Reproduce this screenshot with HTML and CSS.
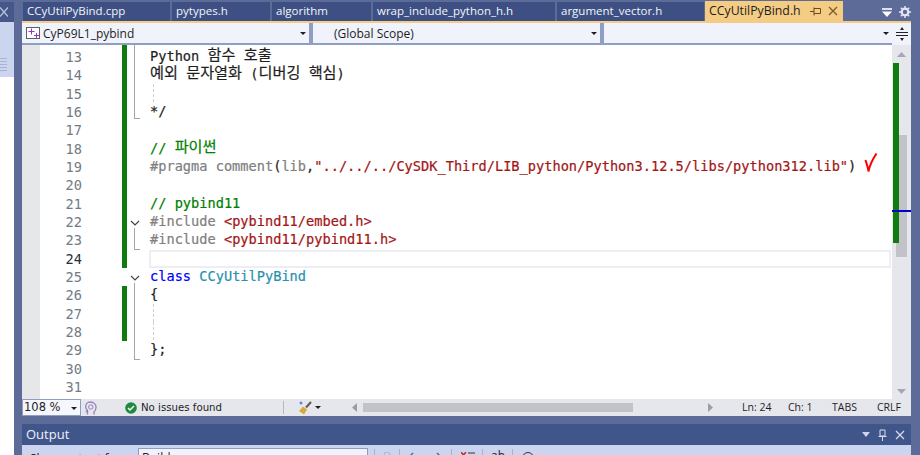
FILE: index.html
```html
<!DOCTYPE html>
<html lang="en">
<head>
<meta charset="utf-8">
<title>CCyUtilPyBind.h</title>
<link rel="stylesheet" href="styles.css">
</head>
<body>
<div class="shell">
  <aside class="side">
    <div class="side-top">
      <svg width="8" height="10" viewBox="0 0 8 10"><path d="M0 0.500l8 9M8 0.500l-8 9" stroke="#b8c2dd" stroke-width="1.300" fill="none"/></svg>
    </div>
    <div class="side-tool">
      <svg class="side-lines" width="7" height="14" viewBox="0 0 7 14"><path d="M0 1.500h7M0 4.500h7M0 7.500h7M0 10.500h7M0 13.500h7" stroke="#a9b2cf" fill="none"/></svg>
    </div>
    <div class="side-rest"></div>
  </aside>
  <main class="main">
    <div class="tabs">
      <div class="tab w1">CCyUtilPyBind.cpp</div>
      <div class="tab w2">pytypes.h</div>
      <div class="tab w3">algorithm</div>
      <div class="tab w4">wrap_include_python_h.h</div>
      <div class="tab w5">argument_vector.h</div>
      <div class="tab active">CCyUtilPyBind.h
        <svg class="pin" width="12" height="10" viewBox="0 0 12 10"><path d="M0 5.500H4M4 1.500v8M4 2.500h6.500v5H4" stroke="#6b4a1e" fill="none"/></svg>
        <svg class="close" width="10" height="10" viewBox="0 0 10 10"><path d="M1 1l8 8M9 1l-8 8" stroke="#7a5a2a" stroke-width="1.300" fill="none"/></svg>
      </div>
      <div class="tab-tools">
        <svg width="10" height="9" viewBox="0 0 10 9"><path d="M0 1h10" stroke="#fff" stroke-width="1.600"/><path d="M0 3.500h10L5 9z" fill="#fff"/></svg>
        <svg width="12" height="12" viewBox="0 0 12 12"><circle cx="6" cy="6" r="3.300" fill="none" stroke="#e4e8f4" stroke-width="2.200"/><path d="M6 0v2.500M6 9.500V12M0 6h2.500M9.500 6H12M1.800 1.800l1.800 1.800M8.400 8.400l1.800 1.800M10.200 1.800L8.400 3.600M3.600 8.400l-1.800 1.800" stroke="#e4e8f4" stroke-width="1.400"/></svg>
      </div>
    </div>
    <div class="doc">
      <div class="navbar">
        <div class="combo c1">
          <svg class="proj" width="14" height="12" viewBox="0 0 14 12"><rect x="0.500" y="0.500" width="13" height="11" fill="#fff" stroke="#5f5f5f"/><path d="M5.500 1.500v6M2.500 4.500h6M10.500 6v5M8 8.500h5" stroke="#a030c0" fill="none"/></svg>
          <span>CyP69L1_pybind</span><i class="arrow"></i>
        </div>
        <div class="combo c2"><span class="scope">(Global Scope)</span><i class="arrow"></i></div>
        <div class="combo c3"><i class="arrow"></i></div>
        <div class="split">
          <svg width="12" height="14" viewBox="0 0 12 14"><path d="M0 5.500h12M0 8.500h12" stroke="#222" fill="none"/><path d="M6 0l2 3H4zM6 14l2-3H4z" fill="#222"/></svg>
        </div>
      </div>
      <div class="editor">
        <div class="selmargin"></div>
        <div class="numbers">
          <div>13</div><div>14</div><div>15</div><div>16</div><div>17</div><div>18</div><div>19</div><div>20</div><div>21</div><div>22</div><div>23</div><div class="cur">24</div><div>25</div><div>26</div><div>27</div><div>28</div><div>29</div><div>30</div><div>31</div>
        </div>
        <div class="changes">
          <div class="chg h1"></div>
          <div class="chg h2"></div>
        </div>
        <div class="outline">
          <div class="bracket b0"></div>
          <svg class="fold f1" width="10" height="6" viewBox="0 0 10 6"><path d="M1 1l4 4 4-4" stroke="#444" stroke-width="1.200" fill="none"/></svg>
          <div class="bracket b1"></div>
          <svg class="fold f2" width="10" height="6" viewBox="0 0 10 6"><path d="M1 1l4 4 4-4" stroke="#444" stroke-width="1.200" fill="none"/></svg>
          <div class="bracket b2"></div>
        </div>
        <div class="code">
          <div class="ln">Python <span class="ko">함수</span> <span class="ko">호출</span></div>
          <div class="ln"><span class="ko">예외</span> <span class="ko">문자열화</span> (<span class="ko">디버깅</span> <span class="ko">핵심</span>)</div>
          <div class="ln"><span class="guide"></span></div>
          <div class="ln">*/</div>
          <div class="ln"></div>
          <div class="ln g">// <span class="ko">파이썬</span></div>
          <div class="ln"><span class="p">#pragma comment</span>(<span class="p">lib</span>,<span class="s">"../../../CySDK_Third/LIB_python/Python3.12.5/libs/python312.lib"</span>)<svg class="tick" width="14" height="20" viewBox="0 0 14 20"><path d="M1.500 7c.800 3 2.500 7 3 11.500 1-5.500 4-12 8-18" stroke="#f00" stroke-width="2" fill="none"/></svg></div>
          <div class="ln"></div>
          <div class="ln g">// pybind11</div>
          <div class="ln"><span class="p">#include</span> <span class="s">&lt;pybind11/embed.h&gt;</span></div>
          <div class="ln"><span class="p">#include</span> <span class="s">&lt;pybind11/pybind11.h&gt;</span></div>
          <div class="ln curline"></div>
          <div class="ln"><span class="kw">class</span> <span class="ty">CCyUtilPyBind</span></div>
          <div class="ln">{</div>
          <div class="ln"><span class="guide"></span></div>
          <div class="ln"><span class="guide"></span></div>
          <div class="ln">};</div>
          <div class="ln"></div>
          <div class="ln"></div>
        </div>
        <div class="vscroll">
          <svg class="sarrow" width="9" height="5" viewBox="0 0 9 5"><path d="M4.500 0L9 5H0z" fill="#a5a8b3"/></svg>
          <div class="track">
            <div class="thumb"></div>
            <div class="mark"></div>
            <div class="caret"></div>
          </div>
          <svg class="sarrow" width="9" height="5" viewBox="0 0 9 5"><path d="M4.500 5L9 0H0z" fill="#a5a8b3"/></svg>
        </div>
      </div>
      <div class="status">
        <div class="zoom"><span>108 %</span><i class="arrow"></i></div>
        <svg class="intelli" width="12" height="14" viewBox="0 0 12 14"><path d="M2.500 13.500V9.500C0 7.500 0 3 3 1.500c4-1.500 8.500 1 8 5 0 2.500-1 3.500-2 4.500v2.500" fill="none" stroke="#9a7fc0" stroke-width="1.300"/><circle cx="5.800" cy="6" r="2.200" fill="none" stroke="#9a7fc0"/><path d="M0.500 11l2-1.500" stroke="#7a5fb0"/></svg>
        <svg class="ok" width="12" height="12" viewBox="0 0 12 12"><circle cx="6" cy="6" r="5.800" fill="#1e8a3c"/><path d="M3 6l2 2 4-4" stroke="#fff" stroke-width="1.400" fill="none"/></svg>
        <span class="issues">No issues found</span>
        <span class="sep"></span>
        <svg class="broom" width="14" height="14" viewBox="0 0 14 14"><path d="M13 1L8 6.500" stroke="#5f5a50" stroke-width="2"/><path d="M5 5.500l4 3-3 5-5-3.500z" fill="#d9a93f"/><path d="M3 0.500v3M1.500 2h3" stroke="#3a64c4"/></svg>
        <i class="arrow dark"></i>
        <svg class="harrow left" width="5" height="9" viewBox="0 0 5 9"><path d="M5 0v9L0 4.500z" fill="#9a9da8"/></svg>
        <div class="htrack"><div class="hthumb"></div></div>
        <svg class="harrow right" width="5" height="9" viewBox="0 0 5 9"><path d="M0 0v9l5-4.500z" fill="#9a9da8"/></svg>
        <div class="positions">
          <span class="pos lnc">Ln: 24</span>
          <span class="pos chc">Ch: 1</span>
          <span class="pos tabsc">TABS</span>
          <span class="pos crlf">CRLF</span>
        </div>
      </div>
    </div>
    <section class="output">
      <div class="out-head">
        <span>Output</span>
        <div class="out-tools">
          <svg width="8" height="5" viewBox="0 0 8 5"><path d="M0 0h8L4 5z" fill="#cfd6ea"/></svg>
          <svg width="9" height="12" viewBox="0 0 9 12"><path d="M2 1h5v6H2zM0.500 7.500h8M4.500 8v4" fill="none" stroke="#d7ddef"/></svg>
          <svg width="10" height="10" viewBox="0 0 10 10"><path d="M1 1l8 8M9 1l-8 8" stroke="#d7ddef" stroke-width="1.200"/></svg>
        </div>
      </div>
      <div class="out-tool">
        <span class="show">Show output from:</span>
        <div class="out-combo">Build</div>
        <span class="tsep s1"></span>
        <svg class="ticon i1" width="8" height="10" viewBox="0 0 8 10"><path d="M1 5V3a3 3 0 0 1 6 0v2" fill="none" stroke="#a9b2cf"/></svg>
        <span class="tsep s2"></span>
        <svg class="ticon i2" width="12" height="8" viewBox="0 0 12 8"><path d="M12 4H2M5 1L2 4l3 3" fill="none" stroke="#1c6fc9" stroke-width="1.400"/></svg>
        <svg class="ticon i3" width="12" height="8" viewBox="0 0 12 8"><path d="M0 4h10M7 1l3 3-3 3" fill="none" stroke="#1c6fc9" stroke-width="1.400"/></svg>
        <span class="tsep s3"></span>
        <svg class="ticon i4" width="14" height="8" viewBox="0 0 14 8"><path d="M0 0l5 6M5 0L0 6" stroke="#c4262e" stroke-width="1.500"/><path d="M7 1h7M7 4h7M7 7h7" stroke="#333"/></svg>
        <span class="tsep s4"></span>
        <span class="ab">ab</span>
        <span class="tsep s5"></span>
        <svg class="ticon i5" width="12" height="12" viewBox="0 0 12 12"><circle cx="6" cy="6" r="5.500" fill="none" stroke="#333"/></svg>
      </div>
    </section>
  </main>
</div>
</body>
</html>
```
FILE: styles.css
```css
* { box-sizing: border-box; }
html, body { margin: 0; height: 100%; overflow: hidden; }
body { background: #5d6b99; font-family: "Open Sans", "Noto Sans", "Liberation Sans", sans-serif; color: #1e1e1e; }
i { display: block; }
svg { display: block; flex: none; }
.shell { display: flex; width: 920px; height: 455px; overflow: hidden; }

.side { width: 14px; flex: none; display: flex; flex-direction: column; overflow: hidden; }
.side-top { height: 20px; margin-top: 2px; background: #46578a; padding-top: 5px; }
.side-tool { height: 55px; background: #ccd5f0; padding-top: 35px; }
.side-rest { flex: 1; background: #fff; }

.main { flex: 1; margin: 0 9px 0 8px; min-width: 0; display: flex; flex-direction: column; }

.tabs { display: flex; height: 21px; flex: none; gap: 2px; padding-left: 1px; font-size: 11.500px; color: #f2f4fa; }
.tab { height: 19px; margin-top: 2px; background: #3e5083; line-height: 18px; padding-left: 4px; white-space: nowrap; }
.w1 { width: 147px; }
.w2 { width: 98px; }
.w3 { width: 99px; }
.w4 { width: 182px; }
.w5 { width: 147px; }
.active { width: 138px; height: 20px; margin-top: 1px; margin-left: -1px; background: #f5cc84; color: #1e1e1e; font-size: 12.300px; display: flex; align-items: center; }
.pin { margin-left: 9px; }
.close { margin-left: 6px; }
.tab-tools { flex: 1; display: flex; justify-content: flex-end; align-items: center; gap: 7px; height: 21px; padding-top: 3px; }

.doc { display: flex; flex-direction: column; height: 395px; flex: none; }

.navbar { height: 24px; flex: none; display: flex; background: #8f9fc3; border-top: 2px solid #f5cc84; gap: 4px; padding-bottom: 2px; }
.combo { height: 20px; background: #f0f3fc; display: flex; align-items: center; position: relative; font-size: 12px; flex: none; }
.c1 { width: 287px; }
.c2 { width: 287px; }
.c3 { width: 288px; }
.proj { margin: 0 3px 0 4px; }
.scope { padding-left: 21px; }
.combo .arrow { position: absolute; right: 3px; top: 9px; }
.arrow { width: 0; height: 0; border-style: solid; border-color: #1e1e1e transparent transparent; border-width: 3px 3px 0; }
.split { flex: 1; background: #f0f3fc; margin: 0 0 -2px -4px; display: flex; align-items: center; justify-content: center; }

.editor { flex: 1; min-height: 0; display: flex; background: #fff; overflow: hidden; }
.selmargin { width: 18px; flex: none; background: #e6e7e8; }
.numbers { width: 42px; flex: none; padding-top: 3px; font: 13.650px/18.330px "DejaVu Sans Mono", monospace; color: #717b85; text-align: right; }
.cur { color: #2a2f35; }
.changes { width: 5px; flex: none; margin-left: 40px; }
.chg { background: #107c10; }
.h1 { height: 223px; }
.h2 { height: 55px; margin-top: 18px; }
.outline { width: 23px; flex: none; position: relative; }
.fold { position: absolute; left: 3px; }
.f1 { top: 175px; }
.f2 { top: 230px; }
.bracket { position: absolute; left: 7px; width: 6px; border-left: 1px solid #a5a5a5; border-bottom: 1px solid #a5a5a5; }
.b0 { top: 0; height: 74px; }
.b1 { top: 183px; height: 22px; }
.b2 { top: 238px; height: 77px; }

.code { flex: 1; min-width: 0; padding-top: 2px; font: 13.650px/18.330px "DejaVu Sans Mono", "Noto Sans CJK KR", monospace; -webkit-text-stroke: 0.2px; }
.ln { height: 18.330px; position: relative; white-space: pre; }
.ko { font-size: 15.200px; line-height: 1; font-family: "Noto Sans CJK KR", sans-serif; position: relative; top: -1px; }
.g { color: #008000; }
.p { color: #808080; }
.s { color: #a31515; }
.kw { color: #0000ff; }
.ty { color: #2b91af; }
.guide { position: absolute; left: 3px; top: 0; height: 18px; border-left: 1px dashed #cfcfcf; }
.curline { border: 2px solid #eeeef2; margin: 1px 1px -1px -1px; }
.tick { position: absolute; left: 714px; top: -4px; }

.vscroll { width: 19px; flex: none; background: #e6e7ed; display: flex; flex-direction: column; align-items: center; padding: 7px 0 5px; }
.track { flex: 1; width: 100%; position: relative; }
.thumb { position: absolute; left: 4px; top: 78px; width: 11px; height: 122px; background: #c2c3c9; }
.mark { position: absolute; left: 1px; top: 6px; width: 6px; height: 180px; background: #107c10; }
.caret { position: absolute; left: 0; top: 153px; width: 19px; height: 2px; background: #0000cd; }

.status { height: 17px; flex: none; display: flex; align-items: center; background: #e6e7ed; }
.zoom { width: 59px; height: 17px; flex: none; background: #f6f7fc; border: 1px solid #8e9dc0; position: relative; padding-left: 1px; font: 11.500px/15px "DejaVu Sans", sans-serif; }
.zoom .arrow { position: absolute; right: 3px; top: 7px; }
.intelli { margin-left: 4px; }
.ok { margin-left: 28px; }
.issues { margin-left: 4px; width: 142px; flex: none; font: 10.200px "DejaVu Sans", sans-serif; }
.sep { width: 1px; height: 13px; background: #b5b7bf; flex: none; }
.broom { margin-left: 14px; }
.dark { margin-left: 3px; }
.left { margin-left: 31px; }
.htrack { width: 339px; height: 9px; margin-left: 6px; flex: none; }
.hthumb { width: 270px; height: 9px; background: #c2c3c9; }
.right { margin-left: 6px; }
.positions { margin-left: auto; display: flex; font-size: 10.500px; line-height: 17px; }
.pos { flex: none; white-space: nowrap; }
.lnc { width: 46px; }
.chc { width: 44px; }
.tabsc { width: 45px; }
.crlf { width: 34px; }

.output { margin-top: 8px; flex: 1; min-height: 0; display: flex; flex-direction: column; overflow: hidden; }
.out-head { height: 21px; flex: none; background: #40568b; color: #eef1f9; font-size: 13px; line-height: 21px; padding: 0 6px 0 4px; display: flex; justify-content: space-between; align-items: center; }
.out-tools { display: flex; align-items: center; gap: 8px; }
.out-tool { flex: 1; background: #ccd5f0; display: flex; font-size: 12px; padding: 3px 0 0 8px; }
.show { width: 108px; flex: none; white-space: nowrap; padding-top: 2px; }
.out-combo { width: 230px; height: 20px; flex: none; background: #f0f3fc; border: 1px solid #8e9dc0; padding-left: 3px; line-height: 18px; }
.tsep { width: 1px; height: 14px; background: #a9b2cf; flex: none; margin-top: 1px; }
.ticon { margin-top: 4px; }
.s1 { margin-left: 6px; }
.i1 { margin-left: 8px; }
.s2 { margin-left: 8px; }
.i2 { margin-left: 8px; }
.i3 { margin-left: 10px; }
.s3 { margin-left: 9px; }
.i4 { margin-left: 9px; }
.s4 { margin-left: 7px; }
.ab { margin-left: 8px; width: 14px; flex: none; line-height: 16px; }
.s5 { margin-left: 7px; }
.i5 { margin-left: 9px; }
```
